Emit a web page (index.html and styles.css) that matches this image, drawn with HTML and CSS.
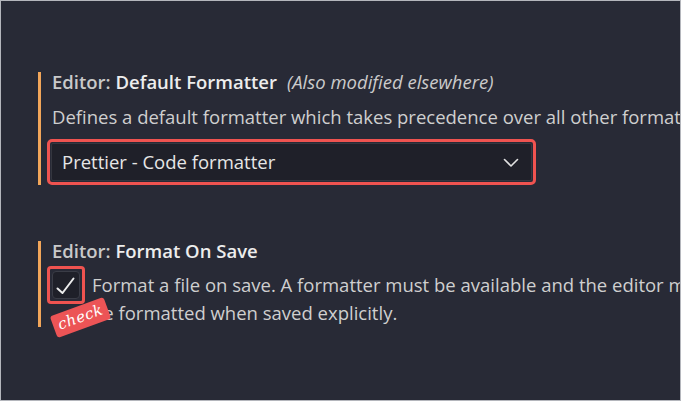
FILE: index.html
```html
<!DOCTYPE html>
<html lang="en">
<head>
<meta charset="utf-8">
<title>Settings</title>
<link rel="stylesheet" href="styles.css">
</head>
<body>
<div class="frame">
  <section class="setting setting-formatter">
    <div class="title"><span class="cat">Editor: </span><span class="label">Default Formatter</span><span class="note">(Also modified elsewhere)</span></div>
    <div class="desc">Defines a default formatter which takes precedence over all other formatter settings.</div>
    <div class="highlight dd-wrap">
      <div class="select">
        <span class="select-value">Prettier - Code formatter</span>
        <svg class="chevron" width="16" height="10" viewBox="0 0 16 10"><path d="M1.5 1.5 L8 8 L14.5 1.5" fill="none" stroke="#e2e2e2" stroke-width="1.6" stroke-linecap="round" stroke-linejoin="round"/></svg>
      </div>
    </div>
  </section>

  <section class="setting setting-save">
    <div class="title"><span class="cat">Editor: </span><span class="label">Format On Save</span></div>
    <div class="row">
      <div class="highlight cb-wrap">
        <div class="checkbox">
          <svg width="26" height="26" viewBox="0 0 26 26"><path d="M4.5 16.5 L9.5 21 L20.5 6.5" fill="none" stroke="#ececec" stroke-width="2" stroke-linecap="round" stroke-linejoin="round"/></svg>
        </div>
        <div class="badge">check</div>
      </div>
      <div class="desc2">
        <div class="line">Format a file on save. A formatter must be available and the editor must not be shutting down.</div>
        <div class="line">be formatted when saved explicitly.</div>
      </div>
    </div>
  </section>
</div>
</body>
</html>
```
FILE: styles.css
```css
* { box-sizing: border-box; }
html, body { margin: 0; padding: 0; background: #282a36; }
.frame {
  width: 681px;
  height: 401px;
  border: 1px solid #b4b6bc;
  background: #282a36;
  overflow: hidden;
  font-family: "Open Sans", "Noto Sans", sans-serif;
  font-size: 18.5px;
  color: #cfcfcf;
  padding-top: 71px;
}
.setting {
  margin-left: 37px;
  border-left: 3px solid #f2a65a;
  padding-left: 11px;
  width: 900px;
}
.title {
  line-height: 20px;
  white-space: nowrap;
  font-weight: 600;
}
.cat { color: #c9c9c9; }
.label { color: #ededed; }
.note {
  font-weight: 400;
  font-style: italic;
  color: #cbcbcb;
  margin-left: 10px;
}
.desc {
  margin-top: 15px;
  line-height: 20px;
  white-space: nowrap;
}
.highlight {
  border: 3px solid #ef5350;
  border-radius: 5px;
  padding: 1px;
}
.dd-wrap {
  margin-top: 12px;
  margin-left: -5px;
  width: 489px;
}
.select {
  height: 38px;
  background: #1f2029;
  border: 1px solid #34363f;
  border-radius: 2px;
  display: flex;
  align-items: center;
  justify-content: space-between;
  padding: 0 12px 0 10px;
  color: #e6e6e6;
}
.select-value { line-height: 20px; }
.chevron { display: block; margin-top: 1px; }
.setting-save { margin-top: 56px; }
.row {
  display: flex;
  align-items: flex-start;
  margin-top: 5px;
}
.cb-wrap {
  position: relative;
  margin-left: -5px;
  width: 38px;
  height: 38px;
  padding: 2px;
  border-radius: 4px;
  flex: none;
}
.checkbox {
  width: 28px;
  height: 28px;
  background: #1f2029;
  border: 1px solid #3a3c46;
  border-radius: 4px;
  display: flex;
  align-items: center;
  justify-content: center;
}
.checkbox svg { display: block; }
.badge {
  position: absolute;
  left: 2px;
  top: 37px;
  width: 57px;
  height: 23px;
  background: #ec5456;
  border-radius: 3px;
  transform: rotate(-20deg);
  color: #ffffff;
  font-family: "DejaVu Serif", "Liberation Serif", serif;
  font-style: italic;
  font-size: 15px;
  line-height: 22px;
  text-align: center;
  letter-spacing: 0.5px;
}
.desc2 {
  margin-left: 7px;
  margin-top: 5px;
  line-height: 28px;
}
.line { white-space: nowrap; }
```
